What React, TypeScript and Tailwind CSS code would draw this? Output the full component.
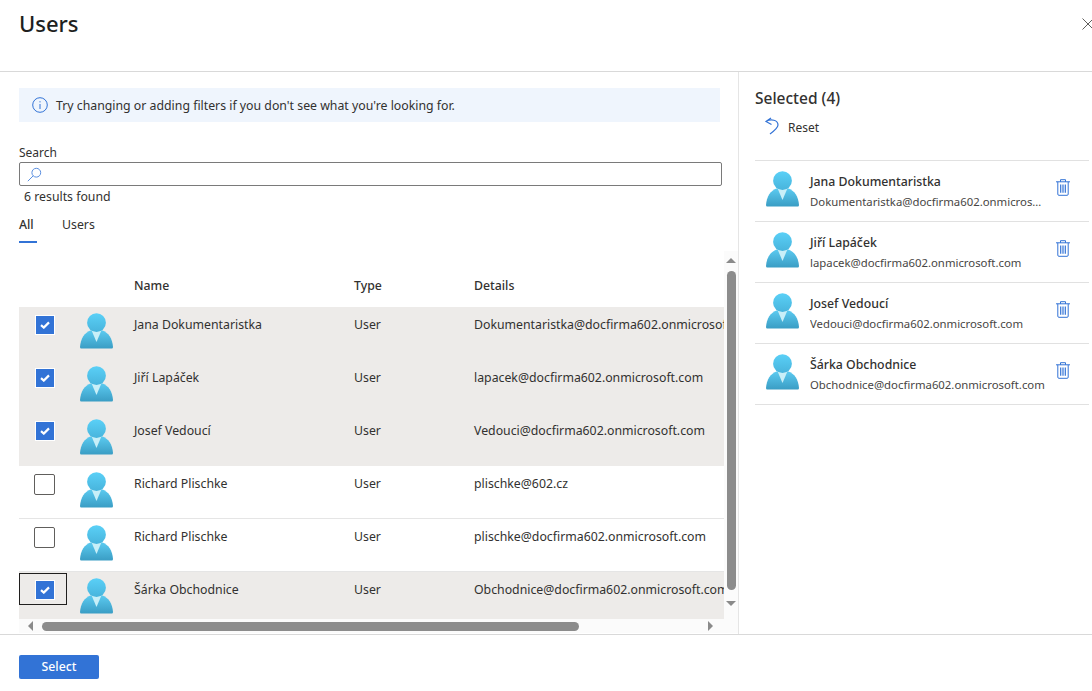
import React from 'react';

const ROWS = [
  { name: 'Jana Dokumentaristka', details: 'Dokumentaristka@docfirma602.onmicrosoft.com', checked: true },
  { name: 'Jiří Lapáček', details: 'lapacek@docfirma602.onmicrosoft.com', checked: true },
  { name: 'Josef Vedoucí', details: 'Vedouci@docfirma602.onmicrosoft.com', checked: true },
  { name: 'Richard Plischke', details: 'plischke@602.cz', checked: false },
  { name: 'Richard Plischke', details: 'plischke@docfirma602.onmicrosoft.com', checked: false },
  { name: 'Šárka Obchodnice', details: 'Obchodnice@docfirma602.onmicrosoft.com', checked: true, focused: true },
];

const SELECTED = [
  { name: 'Jana Dokumentaristka', details: 'Dokumentaristka@docfirma602.onmicrosoft.com' },
  { name: 'Jiří Lapáček', details: 'lapacek@docfirma602.onmicrosoft.com' },
  { name: 'Josef Vedoucí', details: 'Vedouci@docfirma602.onmicrosoft.com' },
  { name: 'Šárka Obchodnice', details: 'Obchodnice@docfirma602.onmicrosoft.com' },
];

const UserAvatar: React.FC<{ id: string }> = ({ id }) => (
  <svg width="33" height="36" viewBox="0 0 33 36" className="shrink-0">
    <defs>
      <linearGradient id={`head-${id}`} x1="0" y1="0" x2="0" y2="1">
        <stop offset="0" stopColor="#5ad0f7" />
        <stop offset="1" stopColor="#48b4dc" />
      </linearGradient>
      <linearGradient id={`body-${id}`} x1="0" y1="0" x2="0" y2="1">
        <stop offset="0" stopColor="#5ccbf1" />
        <stop offset="1" stopColor="#3a9dc4" />
      </linearGradient>
    </defs>
    <path
      d="M1.2 35.5Q0 35.5 0 34C.6 25.5 4.5 19.5 11 17.2L22 17.2C28.5 19.5 32.4 25.5 33 34Q33 35.5 31.8 35.5Z"
      fill={`url(#body-${id})`}
    />
    <path d="M11.6 17.5L21.4 17.5L16.5 29Z" fill="#c8eff8" />
    <circle cx="16.5" cy="9.7" r="9.4" fill={`url(#head-${id})`} />
  </svg>
);

const CheckBox: React.FC<{ checked: boolean }> = ({ checked }) =>
  checked ? (
    <div className="w-5 h-5 bg-[#3273d6] border border-white flex items-center justify-center">
      <svg width="10" height="8" viewBox="0 0 10 8">
        <path d="M1 4.2L3.8 6.6L9 1.4" fill="none" stroke="#ffffff" strokeWidth="2.2" />
      </svg>
    </div>
  ) : (
    <div className="w-[21px] h-[21px] bg-white border border-[#605e5c] rounded-[2px]" />
  );

const TrashIcon = () => (
  <svg width="14" height="17" viewBox="0 0 14 17" fill="none" stroke="#3273d6" strokeWidth="1">
    <path d="M0 2.8H14M4.5 2.8V0.7H9.5V2.8M1.8 2.8V15.2Q1.8 16.3 3 16.3H11Q12.2 16.3 12.2 15.2V2.8" />
    <path d="M4.7 5.5V13.8M7 5.5V13.8M9.3 5.5V13.8" strokeWidth="1.2" />
  </svg>
);

const App: React.FC = () => {
  return (
    <div className="w-[1092px] h-[691px] overflow-hidden bg-white flex flex-col text-[#323130] font-['Noto_Sans','Open_Sans',sans-serif] text-[12.3px]">
      {/* Header */}
      <header className="h-[72px] shrink-0 border-b border-[#d9d9d9] flex items-start justify-between pl-[19px]">
        <h1 className="text-[22px] leading-[30px] mt-[8px] font-medium text-[#201f1e]">Users</h1>
        <svg width="12" height="12" viewBox="0 0 12 12" className="mt-[18px] -mr-[2px]" stroke="#605e5c" strokeWidth="1">
          <path d="M0.5 0.5L11.5 11.5M11.5 0.5L0.5 11.5" />
        </svg>
      </header>

      <div className="flex-1 flex min-h-0">
        {/* Left pane */}
        <div className="w-[739px] shrink-0 border-r border-[#e5e5e5] pt-4 pl-[19px] flex flex-col">
          <div className="w-[701px] h-[34px] bg-[#eff5fd] flex items-center pl-[13px] gap-2">
            <svg width="16" height="16" viewBox="0 0 16 16" fill="none" stroke="#3273d6">
              <circle cx="8" cy="8" r="7.3" />
              <path d="M8 7V12M8 4.2V5.4" />
            </svg>
            <span className="mt-[2px]">Try changing or adding filters if you don't see what you're looking for.</span>
          </div>

          <div className="mt-[23px] text-[12px] leading-[16px]">Search</div>
          <div className="mt-[1px] w-[703px] h-[24px] shrink-0 border border-[#7a7a7a] rounded-[2px] flex items-center pl-[7px]">
            <svg width="15" height="15" viewBox="0 0 15 15" fill="none" stroke="#5b8fe0">
              <circle cx="9.3" cy="5.7" r="4.4" />
              <path d="M6.2 8.8L0.8 14.2" />
            </svg>
          </div>
          <div className="mt-[3px] ml-[5px] leading-[16px]">6 results found</div>

          {/* Tabs */}
          <div className="mt-[11px] flex gap-[25px] h-[28px] leading-[18px]">
            <div className="w-[18px] border-b-2 border-[#3273d6] h-[27px] font-medium">All</div>
            <div>Users</div>
          </div>

          {/* Table */}
          <div className="mt-[7px] w-[719px] h-[382px] shrink-0 flex flex-col">
            <div className="flex flex-1 min-h-0">
              <div className="w-[705px] overflow-hidden">
                <div className="h-[56px] flex items-end pb-[12px] font-medium leading-[18px]">
                  <span className="ml-[115px] w-[220px]">Name</span>
                  <span className="w-[120px]">Type</span>
                  <span>Details</span>
                </div>
                {ROWS.map((row, i) => (
                  <div
                    key={i}
                    className={`h-[53px] flex items-start border-b whitespace-nowrap ${
                      row.checked ? 'bg-[#edebe9] border-[#edebe9]' : 'bg-white border-[#e5e5e5]'
                    }`}
                  >
                    <div
                      className={`w-12 h-8 mt-[1px] shrink-0 flex items-center justify-center ${
                        row.focused ? 'border border-[#201f1e]' : ''
                      }`}
                    >
                      <div className="mt-[2px] ml-[3px]">
                        <CheckBox checked={row.checked} />
                      </div>
                    </div>
                    <div className="ml-[13px] w-[54px] shrink-0 mt-[6px]">
                      <UserAvatar id={`row-${i}`} />
                    </div>
                    <div className="w-[220px] shrink-0 mt-[9px] leading-[18px]">{row.name}</div>
                    <div className="w-[120px] shrink-0 mt-[9px] leading-[18px]">User</div>
                    <div className="mt-[9px] leading-[18px] shrink-0">{row.details}</div>
                  </div>
                ))}
              </div>
              {/* Vertical scrollbar */}
              <div className="w-[14px] bg-[#fbfbfb] flex flex-col items-center">
                <div className="mt-[7px] w-0 h-0 border-x-[5px] border-x-transparent border-b-[5px] border-b-[#8a8a8a]" />
                <div className="mt-[8px] w-[9px] h-[319px] rounded-full bg-[#8c8c8c]" />
                <div className="mt-[11px] w-0 h-0 border-x-[5px] border-x-transparent border-t-[5px] border-t-[#8a8a8a]" />
              </div>
            </div>
            {/* Horizontal scrollbar */}
            <div className="h-[14px] shrink-0 bg-[#fbfbfb] flex items-center pl-[9px]">
              <div className="w-0 h-0 border-y-[5px] border-y-transparent border-r-[5px] border-r-[#8a8a8a]" />
              <div className="ml-[9px] w-[537px] h-[9px] rounded-full bg-[#8c8c8c]" />
              <div className="ml-[129px] w-0 h-0 border-y-[5px] border-y-transparent border-l-[5px] border-l-[#8a8a8a]" />
            </div>
          </div>
        </div>

        {/* Right pane */}
        <div className="flex-1 pl-4 pt-4 min-w-0">
          <div className="text-[15.5px] leading-[20px] font-medium">Selected (4)</div>
          <div className="mt-[11px] ml-[9px] flex items-center gap-[9px] h-[18px] text-[12px]">
            <svg width="15" height="18" viewBox="0 0 15 18" fill="none" stroke="#3273d6" strokeWidth="1.2" className="-mt-[4px]">
              <path d="M7 1L2 4.5L7.5 7.5M2 4.5C7 1.5 14 3 14 8C14 11 10 14 6 17" />
            </svg>
            <span>Reset</span>
          </div>
          <div className="mt-[23px] w-[334px] border-t border-[#e1e1e1]">
            {SELECTED.map((item, i) => (
              <div key={i} className="h-[61px] border-b border-[#e1e1e1] flex items-start">
                <div className="ml-[11px] mt-[10px] shrink-0">
                  <UserAvatar id={`sel-${i}`} />
                </div>
                <div className="ml-[11px] w-[236px] shrink-0 mt-[12px]">
                  <div className="font-medium leading-[18px]">{item.name}</div>
                  <div className="mt-[3px] text-[11.35px] leading-[16px] truncate text-[#484644]">{item.details}</div>
                </div>
                <div className="ml-[10px] mt-[18px] shrink-0">
                  <TrashIcon />
                </div>
              </div>
            ))}
          </div>
        </div>
      </div>

      {/* Footer */}
      <footer className="h-[57px] shrink-0 border-t border-[#d9d9d9] pl-[19px] pt-[20px]">
        <button className="block w-20 h-6 bg-[#3273d6] rounded-[2px] text-white font-medium leading-[24px]">
          Select
        </button>
      </footer>
    </div>
  );
};

export default App;
